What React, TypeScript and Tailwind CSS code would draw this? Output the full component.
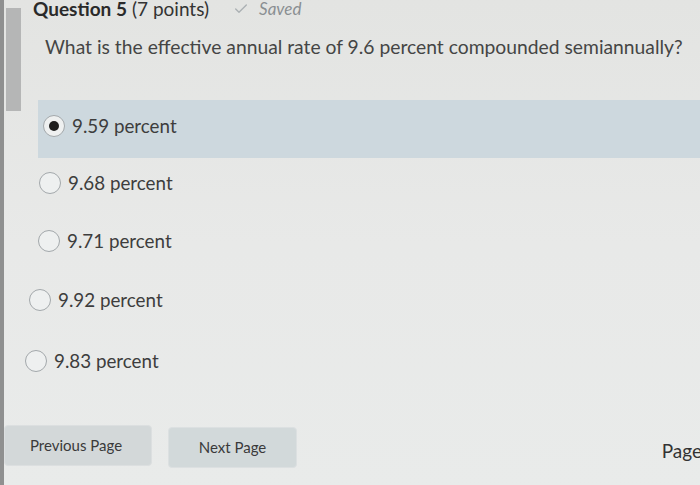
import { Check } from "lucide-react";

const others = [
  { label: "9.68 percent", indent: "pl-[1px]", h: "h-[58px]" },
  { label: "9.71 percent", indent: "pl-[-4px]", h: "h-[58px]" },
  { label: "9.92 percent", indent: "-ml-[9px]", h: "h-[60px]" },
  { label: "9.83 percent", indent: "-ml-[13px]", h: "h-[62px]" },
];

function Radio({ selected }: { selected: boolean }) {
  return (
    <span className="w-[22px] h-[22px] rounded-full border-[1.5px] border-[#a3a8ab] bg-[#eef0f0] flex items-center justify-center shrink-0">
      {selected && <span className="w-[10px] h-[10px] rounded-full bg-[#1e1e1e]" />}
    </span>
  );
}

export default function App() {
  return (
    <div className="w-[700px] h-[485px] overflow-hidden flex flex-col border-l-[4px] border-[#8f9090] bg-gradient-to-b from-[#e3e4e2] via-[#e8e9e8] to-[#e9ebea] font-['Lato','Open_Sans',sans-serif] text-[#3c3c3c]">
      <div className="flex h-[425px] shrink-0">
        <div className="w-[29px] shrink-0 pt-[8px] pl-[2px]">
          <div className="w-[15px] h-[103px] bg-[#b5b6b6]" />
        </div>
        <div className="flex-1 flex flex-col">
          <div className="flex items-center h-[17px] whitespace-nowrap">
            <span className="text-[19px] leading-none font-bold text-[#2a2a2a]">Question 5</span>
            <span className="text-[19px] leading-none ml-[5px] text-[#333]">(7 points)</span>
            <Check className="ml-[24px] w-[16px] h-[16px] text-[#aab0b3]" strokeWidth={2} />
            <span className="ml-[10px] text-[17px] leading-none italic text-[#8a8f92]">Saved</span>
          </div>
          <p className="mt-[18px] ml-[12px] text-[19.3px] leading-[24px] text-[#454545] whitespace-nowrap">
            What is the effective annual rate of 9.6 percent compounded semiannually?
          </p>
          <div className="mt-[41px] ml-[5px] flex flex-col">
            <div className="h-[58px] pb-[6px] pl-[5px] flex items-center bg-[#cdd8de]">
              <Radio selected />
              <span className="ml-[7px] text-[18.8px] text-[#3d3d3d]">9.59 percent</span>
            </div>
            <div className="-mt-[4px] flex flex-col">
              {others.map((o) => (
                <div key={o.label} className={`flex items-center ${o.h}`}>
                  <span className={o.indent} />
                  <Radio selected={false} />
                  <span className="ml-[7px] text-[18.8px] text-[#3d3d3d]">{o.label}</span>
                </div>
              ))}
            </div>
          </div>
        </div>
      </div>
      <div className="flex items-start">
        <button className="w-[148px] h-[41px] rounded-[4px] bg-[#d3d8d9] border border-[#dcdfe0] text-[15px] text-[#3a3a3a] pl-[25px] text-left">
          Previous Page
        </button>
        <button className="ml-[16px] mt-[2px] w-[129px] h-[41px] rounded-[4px] bg-[#d2d9da] border border-[#dce0e1] text-[15px] text-[#3a3a3a]">
          Next Page
        </button>
        <span className="ml-auto mt-[12px] mr-[-2px] text-[19px] text-[#333] whitespace-nowrap">Page</span>
      </div>
    </div>
  );
}
